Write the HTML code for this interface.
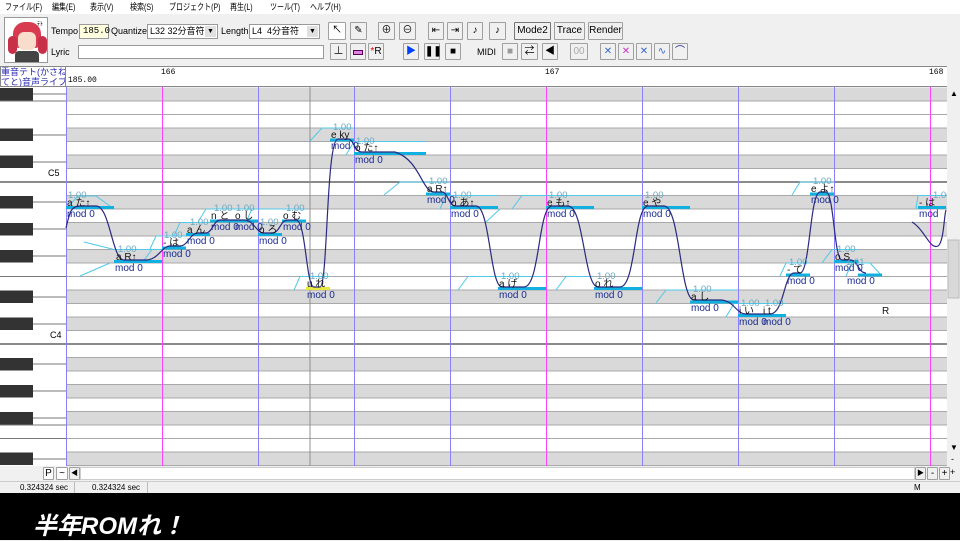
<!DOCTYPE html>
<html><head><meta charset="utf-8"><style>
*{margin:0;padding:0;box-sizing:border-box}
body{width:960px;height:540px;overflow:hidden;background:#f0f0f0;font-family:"Liberation Sans","Noto Sans CJK JP",sans-serif;position:relative;font-size:9px;color:#000}
.a{position:absolute;white-space:nowrap}
.b{position:absolute;border:1px solid #a0a0a0;background:#f0f0f0;border-radius:1px;text-align:center;font-size:10px;line-height:15px}
.menu span{position:absolute;top:0;transform:scaleX(0.78);transform-origin:0 50%}
</style></head><body>
<div class="a menu" style="left:0;top:0;width:960px;height:14px;background:#fff;font-size:9px;line-height:14px">
<span style="left:5px">ファイル(F)</span><span style="left:52px">編集(E)</span><span style="left:90px">表示(V)</span><span style="left:130px">検索(S)</span><span style="left:169px">プロジェクト(P)</span><span style="left:230px">再生(L)</span><span style="left:270px">ツール(T)</span><span style="left:310px">ヘルプ(H)</span></div>
<!-- avatar -->
<div class="a" style="left:4px;top:17px;width:44px;height:46px;background:#fff;border:1px solid #999;overflow:hidden">
<div class="a" style="left:8px;top:4px;width:28px;height:26px;background:#d83a50;border-radius:12px 12px 6px 6px"></div>
<div class="a" style="left:13px;top:14px;width:18px;height:18px;background:#f8dccc;border-radius:6px"></div>
<div class="a" style="left:3px;top:18px;width:9px;height:18px;background:#c8304a;border-radius:5px"></div>
<div class="a" style="left:33px;top:18px;width:9px;height:18px;background:#c8304a;border-radius:5px"></div>
<div class="a" style="left:10px;top:33px;width:24px;height:12px;background:#444;border-radius:4px 4px 0 0"></div>
<div class="a" style="left:32px;top:1px;font-size:6px">ﾃﾄ</div></div>
<div class="a" style="left:51px;top:26px;font-size:9px">Tempo</div>
<div class="a" style="left:79px;top:24px;width:30px;height:15px;background:#ffffe0;border:1px solid #999;font-family:'Liberation Mono',monospace;font-size:9px;line-height:13px;padding-left:3px">185.0</div>
<div class="a" style="left:111px;top:26px">Quantize</div>
<div class="a" style="left:147px;top:24px;width:71px;height:15px;background:#fff;border:1px solid #999;font-size:9px;line-height:13px;padding-left:2px">L32 32分音符<span style="position:absolute;right:1px;top:1px;width:11px;height:11px;background:#e0e0e0;font-size:7px;line-height:11px;text-align:center">▼</span></div>
<div class="a" style="left:221px;top:26px">Length</div>
<div class="a" style="left:249px;top:24px;width:71px;height:15px;background:#fff;border:1px solid #999;font-size:9px;line-height:13px;padding-left:2px">L4&nbsp; 4分音符<span style="position:absolute;right:1px;top:1px;width:11px;height:11px;background:#e0e0e0;font-size:7px;line-height:11px;text-align:center">▼</span></div>
<div class="b" style="left:328px;top:22px;width:18px;height:18px;background:#fff">↖</div>
<div class="b" style="left:350px;top:22px;width:17px;height:18px">✎</div>
<div class="b" style="left:378px;top:22px;width:17px;height:18px">⊕</div>
<div class="b" style="left:399px;top:22px;width:17px;height:18px">⊖</div>
<div class="b" style="left:428px;top:22px;width:16px;height:18px">⇤</div>
<div class="b" style="left:447px;top:22px;width:16px;height:18px">⇥</div>
<div class="b" style="left:467px;top:22px;width:16px;height:18px">♪</div>
<div class="b" style="left:489px;top:22px;width:17px;height:18px">♪</div>
<div class="b" style="left:514px;top:22px;width:37px;height:18px;border-color:#777">Mode2</div>
<div class="b" style="left:554px;top:22px;width:31px;height:18px">Trace</div>
<div class="b" style="left:588px;top:22px;width:35px;height:18px">Render</div>
<div class="a" style="left:51px;top:47px">Lyric</div>
<div class="a" style="left:78px;top:45px;width:246px;height:14px;background:#fff;border:1px solid #999"></div>
<div class="b" style="left:330px;top:43px;width:17px;height:17px">⊥</div>
<div class="b" style="left:350px;top:43px;width:16px;height:17px"><div style="margin:6px 2px;height:5px;background:#e080e0;border:1px solid #505"></div></div>
<div class="b" style="left:368px;top:43px;width:16px;height:17px"><span style="color:#d00">*</span>R</div>
<div class="b" style="left:403px;top:43px;width:16px;height:17px;color:#0040ff">▶</div>
<div class="b" style="left:424px;top:43px;width:16px;height:17px;font-weight:bold">❚❚</div>
<div class="b" style="left:445px;top:43px;width:16px;height:17px">■</div>
<div class="a" style="left:477px;top:47px">MIDI</div>
<div class="b" style="left:502px;top:43px;width:16px;height:17px;color:#999">■</div>
<div class="b" style="left:521px;top:43px;width:17px;height:17px">⇄</div>
<div class="b" style="left:542px;top:43px;width:16px;height:17px">◀</div>
<div class="b" style="left:570px;top:43px;width:18px;height:17px;color:#aaa">00</div>
<div class="b" style="left:600px;top:43px;width:16px;height:17px;color:#36c">✕</div>
<div class="b" style="left:618px;top:43px;width:16px;height:17px;color:#c3c">✕</div>
<div class="b" style="left:636px;top:43px;width:16px;height:17px;color:#36c">✕</div>
<div class="b" style="left:654px;top:43px;width:16px;height:17px;color:#36c">∿</div>
<div class="b" style="left:672px;top:43px;width:16px;height:17px;color:#228">⌒</div>
<!-- header -->
<div class="a" style="left:0;top:66px;width:947px;height:21px;background:#fff;border-top:1px solid #888;border-bottom:1px solid #888"></div>
<div class="a" style="left:0;top:66px;width:66px;height:21px;background:#fff;border:1px solid #888;color:#2a2ab0;font-size:9px;line-height:10px;overflow:hidden">重音テト(かさね<br>てと)音声ライブ</div>
<div class="a" style="left:68px;top:76px;font-size:8px;font-family:'Liberation Mono',monospace">185.00</div>
<div class="a" style="left:161px;top:68px;font-size:8px;font-family:'Liberation Mono',monospace">166</div>
<div class="a" style="left:545px;top:68px;font-size:8px;font-family:'Liberation Mono',monospace">167</div>
<div class="a" style="left:929px;top:68px;font-size:8px;font-family:'Liberation Mono',monospace">168</div>
<!-- roll -->
<svg class="a" style="left:0;top:0" width="960" height="540" viewBox="0 0 960 540" font-family="Liberation Sans, Noto Sans CJK JP, sans-serif">
<rect x="0" y="87" width="947" height="380" fill="#fff"/>
<g fill="#d9d9d9">
<rect x="66" y="87.5" width="881" height="13.5"/><rect x="66" y="128" width="881" height="13.5"/><rect x="66" y="155" width="881" height="13.5"/><rect x="66" y="195.5" width="881" height="13.5"/><rect x="66" y="222.5" width="881" height="13.5"/><rect x="66" y="249.5" width="881" height="13.5"/><rect x="66" y="290" width="881" height="13.5"/><rect x="66" y="317" width="881" height="13.5"/><rect x="66" y="357.5" width="881" height="13.5"/><rect x="66" y="384.5" width="881" height="13.5"/><rect x="66" y="411.5" width="881" height="13.5"/><rect x="66" y="452" width="881" height="13.5"/>
</g>
<rect x="880" y="303.5" width="50" height="13.5" fill="#fff"/>
<g stroke="#a8a8a8" stroke-width="1">
<path d="M66 101H947M66 114.5H947M66 128H947M66 141.5H947M66 155H947M66 168.5H947M66 195.5H947M66 209H947M66 222.5H947M66 236H947M66 249.5H947M66 263H947M66 276.5H947M66 290H947M66 303.5H947M66 317H947M66 330.5H947M66 357.5H947M66 371H947M66 384.5H947M66 398H947M66 411.5H947M66 425H947M66 438.5H947M66 452H947M66 465.5H947"/>
</g>
<path d="M0 182H947M0 344H947" stroke="#444" stroke-width="1.3"/>
<!-- piano -->
<g fill="#333">
<rect x="0" y="88" width="33" height="12.5"/><rect x="0" y="128.5" width="33" height="12.5"/><rect x="0" y="155.5" width="33" height="12.5"/><rect x="0" y="196" width="33" height="12.5"/><rect x="0" y="223" width="33" height="12.5"/><rect x="0" y="250" width="33" height="12.5"/><rect x="0" y="290.5" width="33" height="12.5"/><rect x="0" y="317.5" width="33" height="12.5"/><rect x="0" y="358" width="33" height="12.5"/><rect x="0" y="385" width="33" height="12.5"/><rect x="0" y="412" width="33" height="12.5"/><rect x="0" y="452.5" width="33" height="12.5"/>
</g>
<path d="M33 94H66M33 135H66M33 162H66M33 202H66M33 229H66M33 256H66M33 297H66M33 324H66M33 364H66M33 391H66M33 418H66M33 459H66M0 101H66M0 276.5H66M0 425H66M0 438.5H66" stroke="#777" stroke-width="1"/>
<text x="48" y="176" font-size="9">C5</text>
<text x="50" y="338" font-size="9">C4</text>
<!-- vertical lines -->
<path d="M310 87V467" stroke="#909090"/>
<path d="M66.5 87V467M258.5 87V467M354.5 87V467M450.5 87V467M642.5 87V467M738.5 87V467M834.5 87V467" stroke="#8a80ff"/>
<path d="M162.5 87V467M546.5 87V467M930.5 87V467" stroke="#ff40ff"/>
<!-- envelopes -->
<g stroke="#50c8e8" stroke-width="1" fill="none">
<path d="M66 209L78 196H96L114 209"/><path d="M84 242L114 249.5H162"/><path d="M150 249L156 236H186"/><path d="M174 236L180 222.5H210"/><path d="M198 222L206 209H258"/><path d="M246 222L252 209H306"/><path d="M294 290L300 276.5H330"/><path d="M310 141L322 128H354"/><path d="M346 155L354 141.5H426"/><path d="M384 195L400 182H450"/><path d="M440 209L446 195.5H498"/><path d="M486 222L500 209"/><path d="M458 290L468 276.5H546"/><path d="M512 209L522 195.5H642"/><path d="M556 290L566 276.5H594"/><path d="M656 303L666 290H738"/><path d="M726 317L734 303.5H786"/><path d="M780 276L786 263H810"/><path d="M792 195L800 182H834"/><path d="M822 263L832 249.5H858"/><path d="M846 276L852 263H870L882 276"/><path d="M916 209L918 195.5H946"/><path d="M80 276L110 263"/><path d="M142 263L152 249.5"/>
</g>
<!-- note bars -->
<g fill="#10b0e0">
<rect x="66" y="206" width="48" height="3"/><rect x="114" y="260" width="48" height="3"/><rect x="162" y="246.5" width="24" height="3"/><rect x="186" y="233" width="24" height="3"/><rect x="210" y="219.5" width="48" height="3"/><rect x="258" y="233" width="24" height="3"/><rect x="282" y="219.5" width="24" height="3"/><rect x="330" y="138.5" width="24" height="3"/><rect x="354" y="152" width="72" height="3"/><rect x="426" y="192.5" width="24" height="3"/><rect x="450" y="206" width="48" height="3"/><rect x="498" y="287" width="48" height="3"/><rect x="546" y="206" width="48" height="3"/><rect x="594" y="287" width="48" height="3"/><rect x="642" y="206" width="48" height="3"/><rect x="690" y="300.5" width="48" height="3"/><rect x="738" y="314" width="48" height="3"/><rect x="786" y="273.5" width="24" height="3"/><rect x="810" y="192.5" width="24" height="3"/><rect x="834" y="260" width="24" height="3"/><rect x="858" y="273.5" width="24" height="3"/><rect x="918" y="206" width="28" height="3"/>
</g>
<rect x="306" y="287" width="24" height="3" fill="#e8e840"/>
<!-- pitch curve -->
<path fill="none" stroke="#2a2a80" stroke-width="1.2" d="M66,228 C70,210 72,206 80,206 L96,206 C110,206 112,260 124,260 L146,260 C158,260 162,246 170,246 L180,246 C188,246 190,233 198,233 L206,233 C212,233 214,220 220,220 L244,220 C254,220 256,233 264,233 L272,233 C280,233 280,220 288,220 L296,220 C306,220 306,287 314,287 L320,287 C328,287 326,139 338,139 L348,139 C354,139 354,152 362,152 L395,152 C420,160 422,192 434,192 L442,192 C448,192 448,206 456,206 L476,206 C490,206 490,287 502,287 L524,287 C540,287 538,206 552,206 L568,206 C584,206 584,287 598,287 L620,287 C636,287 634,206 648,206 L664,206 C680,206 680,300 694,300 L720,300 C734,300 736,314 746,314 L770,314 C784,314 784,273 794,273 L800,273 C810,273 810,192 820,192 L826,192 C834,192 834,260 842,260 L850,260 C858,260 858,273 866,273 M912,222 C925,230 930,250 938,246 C944,242 944,215 946,210"/>
<!-- labels -->
<g font-size="9.5" fill="#6aa8c0">
<text x="68" y="198">1.00</text><text x="118" y="252">1.00</text><text x="164" y="238">1.00</text><text x="190" y="225">1.00</text><text x="214" y="211">1.00</text><text x="236" y="211">1.00</text><text x="260" y="225">1.00</text><text x="286" y="211">1.00</text><text x="310" y="279">1.00</text><text x="333" y="130">1.00</text><text x="356" y="144">1.00</text><text x="429" y="184">1.00</text><text x="453" y="198">1.00</text><text x="501" y="279">1.00</text><text x="549" y="198">1.00</text><text x="597" y="279">1.00</text><text x="645" y="198">1.00</text><text x="693" y="292">1.00</text><text x="741" y="306">1.00</text><text x="765" y="306">1.00</text><text x="789" y="265">1.00</text><text x="813" y="184">1.00</text><text x="837" y="252">1.00</text><text x="846" y="265">1.01</text><text x="933" y="198">1.00</text>
</g>
<g font-size="10" fill="#111">
<text x="67" y="206">a た↑</text><text x="116" y="260">a R↑</text><text x="163" y="246">- は</text><text x="187" y="233">a ん</text><text x="211" y="219">n と</text><text x="235" y="219">o し</text><text x="259" y="233">o ろ</text><text x="283" y="219">o む</text><text x="307" y="287">u れ</text><text x="331" y="138">e ky</text><text x="355" y="151">o た↑</text><text x="427" y="192">a R↑</text><text x="451" y="206">o あ↑</text><text x="499" y="287">a げ</text><text x="547" y="206">e も↑</text><text x="595" y="287">o れ</text><text x="643" y="206">e や</text><text x="691" y="300">a し</text><text x="739" y="314">i い</text><text x="763" y="314">i t</text><text x="787" y="273">- て</text><text x="811" y="192">e よ↑</text><text x="835" y="260">o S</text><text x="919" y="206">- は</text><text x="882" y="314">R</text>
</g>
<g font-size="10" fill="#1a2a90">
<text x="67" y="217">mod 0</text><text x="115" y="271">mod 0</text><text x="163" y="257">mod 0</text><text x="187" y="244">mod 0</text><text x="211" y="230">mod 0</text><text x="235" y="230">mod 0</text><text x="259" y="244">mod 0</text><text x="283" y="230">mod 0</text><text x="307" y="298">mod 0</text><text x="331" y="149">mod 0</text><text x="355" y="163">mod 0</text><text x="427" y="203">mod 0</text><text x="451" y="217">mod 0</text><text x="499" y="298">mod 0</text><text x="547" y="217">mod 0</text><text x="595" y="298">mod 0</text><text x="643" y="217">mod 0</text><text x="691" y="311">mod 0</text><text x="739" y="325">mod 0</text><text x="763" y="325">mod 0</text><text x="787" y="284">mod 0</text><text x="811" y="203">mod 0</text><text x="835" y="271">mod 0</text><text x="847" y="284">mod 0</text><text x="919" y="217">mod</text>
</g>
<!-- right scrollbar -->
<rect x="947" y="87" width="13" height="393" fill="#f0f0f0"/>
<rect x="948" y="240" width="11" height="58" fill="#d8d8d8" stroke="#bbb"/>
<text x="950" y="96" font-size="8">▲</text><text x="950" y="450" font-size="8">▼</text>
<text x="951" y="462" font-size="9">-</text><text x="950" y="475" font-size="9">+</text>
</svg>
<!-- bottom scroll -->
<div class="a" style="left:0;top:466px;width:947px;height:15px;background:#f0f0f0"></div>
<div class="a" style="left:80px;top:467px;width:835px;height:13px;background:#fff;border:1px solid #ccc"></div>
<div class="b" style="left:43px;top:467px;width:11px;height:13px;line-height:11px;background:#fff">P</div>
<div class="b" style="left:56px;top:467px;width:12px;height:13px;line-height:11px;background:#fff">~</div>
<div class="b" style="left:69px;top:467px;width:11px;height:13px;line-height:11px;font-size:7px">◀</div>
<div class="b" style="left:915px;top:467px;width:11px;height:13px;line-height:11px;font-size:7px">▶</div>
<div class="b" style="left:927px;top:467px;width:11px;height:13px;line-height:11px">-</div>
<div class="b" style="left:939px;top:467px;width:11px;height:13px;line-height:11px">+</div>
<!-- status -->
<div class="a" style="left:0;top:481px;width:960px;height:12px;background:#f0f0f0;border-top:1px solid #ccc;font-size:8px;line-height:11px">
<span class="a" style="left:20px;top:0">0.324324 sec</span>
<span class="a" style="left:74px;top:0;width:1px;height:11px;background:#bbb"></span>
<span class="a" style="left:92px;top:0">0.324324 sec</span>
<span class="a" style="left:147px;top:0;width:1px;height:11px;background:#bbb"></span>
<span class="a" style="left:914px;top:0">M</span></div>
<div class="a" style="left:0;top:493px;width:960px;height:47px;background:#000"></div>
<div class="a" style="left:33px;top:506px;color:#fff;font-size:24px;font-style:italic;font-weight:bold;font-family:'Liberation Sans','Noto Sans CJK JP',sans-serif">半年ROMれ！</div>
</body></html>
